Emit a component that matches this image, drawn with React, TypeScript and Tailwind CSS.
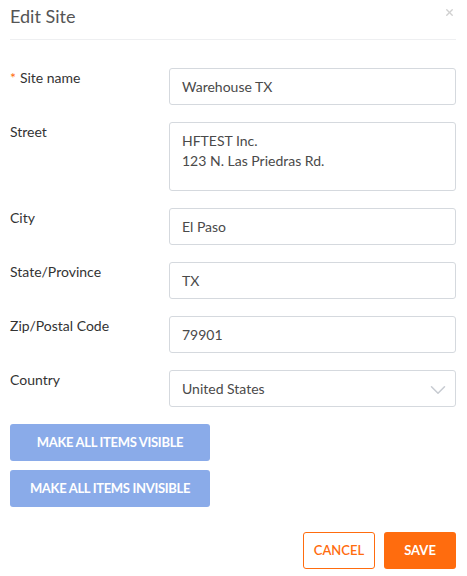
import { ChevronDown, X } from "lucide-react";

const FIELDS = [
  { label: "City", value: "El Paso" },
  { label: "State/Province", value: "TX" },
  { label: "Zip/Postal Code", value: "79901" },
];

function Row({ label, required, children }: { label: string; required?: boolean; children: React.ReactNode }) {
  return (
    <div className="flex mb-[17px]">
      <div className="w-[159px] shrink-0 pt-[1px] text-[14px] leading-[18px] text-[#333]">
        {required && <span className="text-[#ff6c0e] mr-1">*</span>}
        {label}
      </div>
      <div className="flex-1">{children}</div>
    </div>
  );
}

export default function App() {
  return (
    <div
      className="w-[467px] h-[576px] bg-white pl-[10px] pr-[11px]"
      style={{ fontFamily: "Lato, 'Open Sans', sans-serif" }}
    >
      {/* Header */}
      <div className="flex items-start justify-between h-[40px] border-b border-[#eeeff1] pt-[5px]">
        <h1 className="text-[18px] leading-[22px] text-[#555]">Edit Site</h1>
        <X size={11} strokeWidth={3} className="text-[#d0d0d0] mt-[2px] mr-[1px]" />
      </div>

      <div className="pt-[28px]">
        <Row label="Site name" required>
          <div className="h-[37px] border border-[#d5d9de] rounded-[3px] px-[12px] flex items-center text-[14px] text-[#4a4a4a]">
            Warehouse TX
          </div>
        </Row>
        <Row label="Street">
          <div className="h-[69px] border border-[#d5d9de] rounded-[3px] px-[12px] pt-[8px] text-[14px] leading-[20px] text-[#4a4a4a]">
            <div>HFTEST Inc.</div>
            <div>123 N. Las Priedras Rd.</div>
          </div>
        </Row>
        {FIELDS.map((f) => (
          <Row key={f.label} label={f.label}>
            <div className="h-[37px] border border-[#d5d9de] rounded-[3px] px-[12px] flex items-center text-[14px] text-[#4a4a4a]">
              {f.value}
            </div>
          </Row>
        ))}
        <Row label="Country">
          <div className="h-[37px] border border-[#d5d9de] rounded-[3px] pl-[12px] pr-[4px] flex items-center justify-between text-[14px] text-[#4a4a4a]">
            <span>United States</span>
            <ChevronDown size={26} strokeWidth={1.4} className="text-[#c8ccd2] mt-[2px]" />
          </div>
        </Row>

        <div className="flex flex-col gap-[9px] w-[200px]">
          <button className="h-[37px] rounded-[3px] bg-[#8aabe9] text-white text-[13px] font-bold tracking-tight">
            MAKE ALL ITEMS VISIBLE
          </button>
          <button className="h-[37px] rounded-[3px] bg-[#8aabe9] text-white text-[13px] font-bold tracking-tight">
            MAKE ALL ITEMS INVISIBLE
          </button>
        </div>

        <div className="flex justify-end gap-[9px] mt-[25px]">
          <button className="w-[72px] h-[37px] rounded-[3px] border border-[#ff6c0e] text-[#ff6c0e] text-[13px] font-semibold">
            CANCEL
          </button>
          <button className="w-[72px] h-[37px] rounded-[3px] bg-[#ff6c0e] text-white text-[13px] font-bold">
            SAVE
          </button>
        </div>
      </div>
    </div>
  );
}
